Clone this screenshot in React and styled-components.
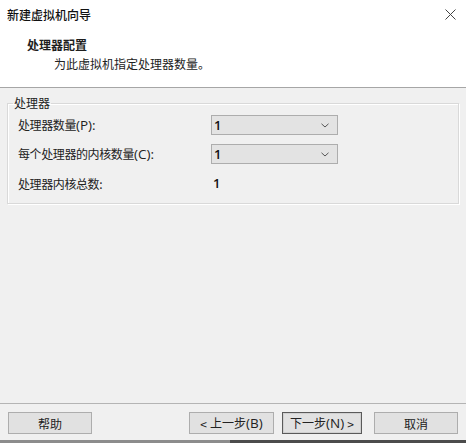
import React from 'react';
import styled, { createGlobalStyle } from 'styled-components';

const GlobalStyle = createGlobalStyle`
    html, body {
        margin: 0;
        padding: 0;
        background: #ffffff;
    }
    body {
        font-family: "Noto Sans CJK SC", "Noto Sans", sans-serif;
        color: #1e1e1e;
    }
`;

const Window = styled.div`
    width: 466px;
    height: 443px;
    display: flex;
    flex-direction: column;
    box-sizing: border-box;
    background: #f0f0f0;
    overflow: hidden;
`;

const Header = styled.div`
    height: 88px;
    box-sizing: border-box;
    background: #ffffff;
    border-bottom: 1px solid #a6a6a6;
    display: flex;
    flex-direction: column;
`;

const TitleBar = styled.div`
    height: 29px;
    display: flex;
    align-items: center;
    justify-content: space-between;
    padding: 0 10px 0 7px;
    font-size: 12px;
    font-weight: 500;
    color: #111;
`;

const CloseButton = styled.div`
    width: 12px;
    height: 12px;
    display: flex;
    align-items: center;
    justify-content: center;
`;

const PageTitle = styled.div`
    margin: 8px 0 0 27px;
    font-size: 12px;
    font-weight: 700;
    line-height: 16px;
`;

const PageHint = styled.div`
    margin: 3px 0 0 54px;
    font-size: 12px;
    line-height: 16px;
    color: #222;
`;

const Body = styled.div`
    flex: 1;
    padding: 7px 7px 0;
`;

const Group = styled.fieldset`
    margin: 0;
    padding: 0 10px 10px;
    border: 1px solid #d9d9d9;
    box-shadow: 1px 1px 0 #ffffff inset, 1px 1px 0 #ffffff;
    min-width: 0;
    height: 109px;
    box-sizing: border-box;
`;

const Legend = styled.legend`
    margin-left: -5px;
    padding: 0 1px;
    font-size: 12px;
    line-height: 16px;
    color: #222;
`;

const Rows = styled.div`
    margin-top: 4px;
    display: grid;
    grid-template-columns: 193px 127px;
    grid-auto-rows: 20px;
    row-gap: 9px;
    align-items: center;
`;

const Label = styled.div`
    font-size: 12px;
    letter-spacing: -0.4px;
    color: #222;
    white-space: nowrap;
`;

const Key = styled.span`
    font-family: "Open Sans", "Noto Sans", sans-serif;
    font-size: 13.5px;
    letter-spacing: 0;
    font-weight: 500;
`;

const Combo = styled.div`
    height: 20px;
    box-sizing: border-box;
    border: 1px solid #adadad;
    background: #e3e3e3;
    display: flex;
    align-items: center;
    justify-content: space-between;
    padding: 0 8px 0 2px;
`;

const Value = styled.span`
    font-family: "Open Sans", "Noto Sans", sans-serif;
    font-size: 13px;
    font-weight: 600;
    color: #111;
    padding-left: ${p => p.$indent || 0}px;
`;

const Footer = styled.div`
    border-top: 1px solid #b4b4b4;
    padding: 8px 8px 6px;
    display: flex;
    align-items: center;
    background: #f0f0f0;
`;

const Button = styled.div`
    width: ${p => p.$width}px;
    height: 22px;
    box-sizing: border-box;
    margin-left: ${p => p.$gap || 0}px;
    border: 1px solid ${p => (p.$default ? '#5a5a5a' : '#adadad')};
    box-shadow: ${p => (p.$default ? 'inset 0 0 0 1px #d0d0d0' : 'none')};
    background: #e1e1e1;
    display: flex;
    align-items: center;
    justify-content: center;
    gap: 3px;
    font-size: 12px;
    color: #222;
`;

const Spacer = styled.div`
    flex: 1;
`;

const BottomEdge = styled.div`
    height: 3px;
    background: linear-gradient(to right, #8c8c8c 0, #8c8c8c 230px, #4c4c4c 230px);
`;

function Chevron() {
    return (
        <svg width="8" height="5" viewBox="0 0 8 5">
            <path d="M0.5 0.8 L4 4 L7.5 0.8" fill="none" stroke="#555" strokeWidth="1" />
        </svg>
    );
}

function CloseIcon() {
    return (
        <svg width="11" height="11" viewBox="0 0 11 11">
            <path d="M0.5 0.5 L10.5 10.5 M10.5 0.5 L0.5 10.5" stroke="#444" strokeWidth="1" />
        </svg>
    );
}

export default function App() {
    return (
        <Window>
            <GlobalStyle />
            <Header>
                <TitleBar>
                    <span>新建虚拟机向导</span>
                    <CloseButton><CloseIcon /></CloseButton>
                </TitleBar>
                <PageTitle>处理器配置</PageTitle>
                <PageHint>为此虚拟机指定处理器数量。</PageHint>
            </Header>
            <Body>
                <Group>
                    <Legend>处理器</Legend>
                    <Rows>
                        <Label>处理器数量<Key>(P):</Key></Label>
                        <Combo><Value>1</Value><Chevron /></Combo>
                        <Label>每个处理器的内核数量<Key>(C):</Key></Label>
                        <Combo><Value>1</Value><Chevron /></Combo>
                        <Label>处理器内核总数:</Label>
                        <Value $indent={2}>1</Value>
                    </Rows>
                </Group>
            </Body>
            <Footer>
                <Button $width={84}>帮助</Button>
                <Spacer />
                <Button $width={85}><span>&lt;</span><span>上一步<Key>(B)</Key></span></Button>
                <Button $width={80} $gap={8} $default><span>下一步<Key>(N)</Key></span><span>&gt;</span></Button>
                <Button $width={84} $gap={12}>取消</Button>
            </Footer>
            <BottomEdge />
        </Window>
    );
}
